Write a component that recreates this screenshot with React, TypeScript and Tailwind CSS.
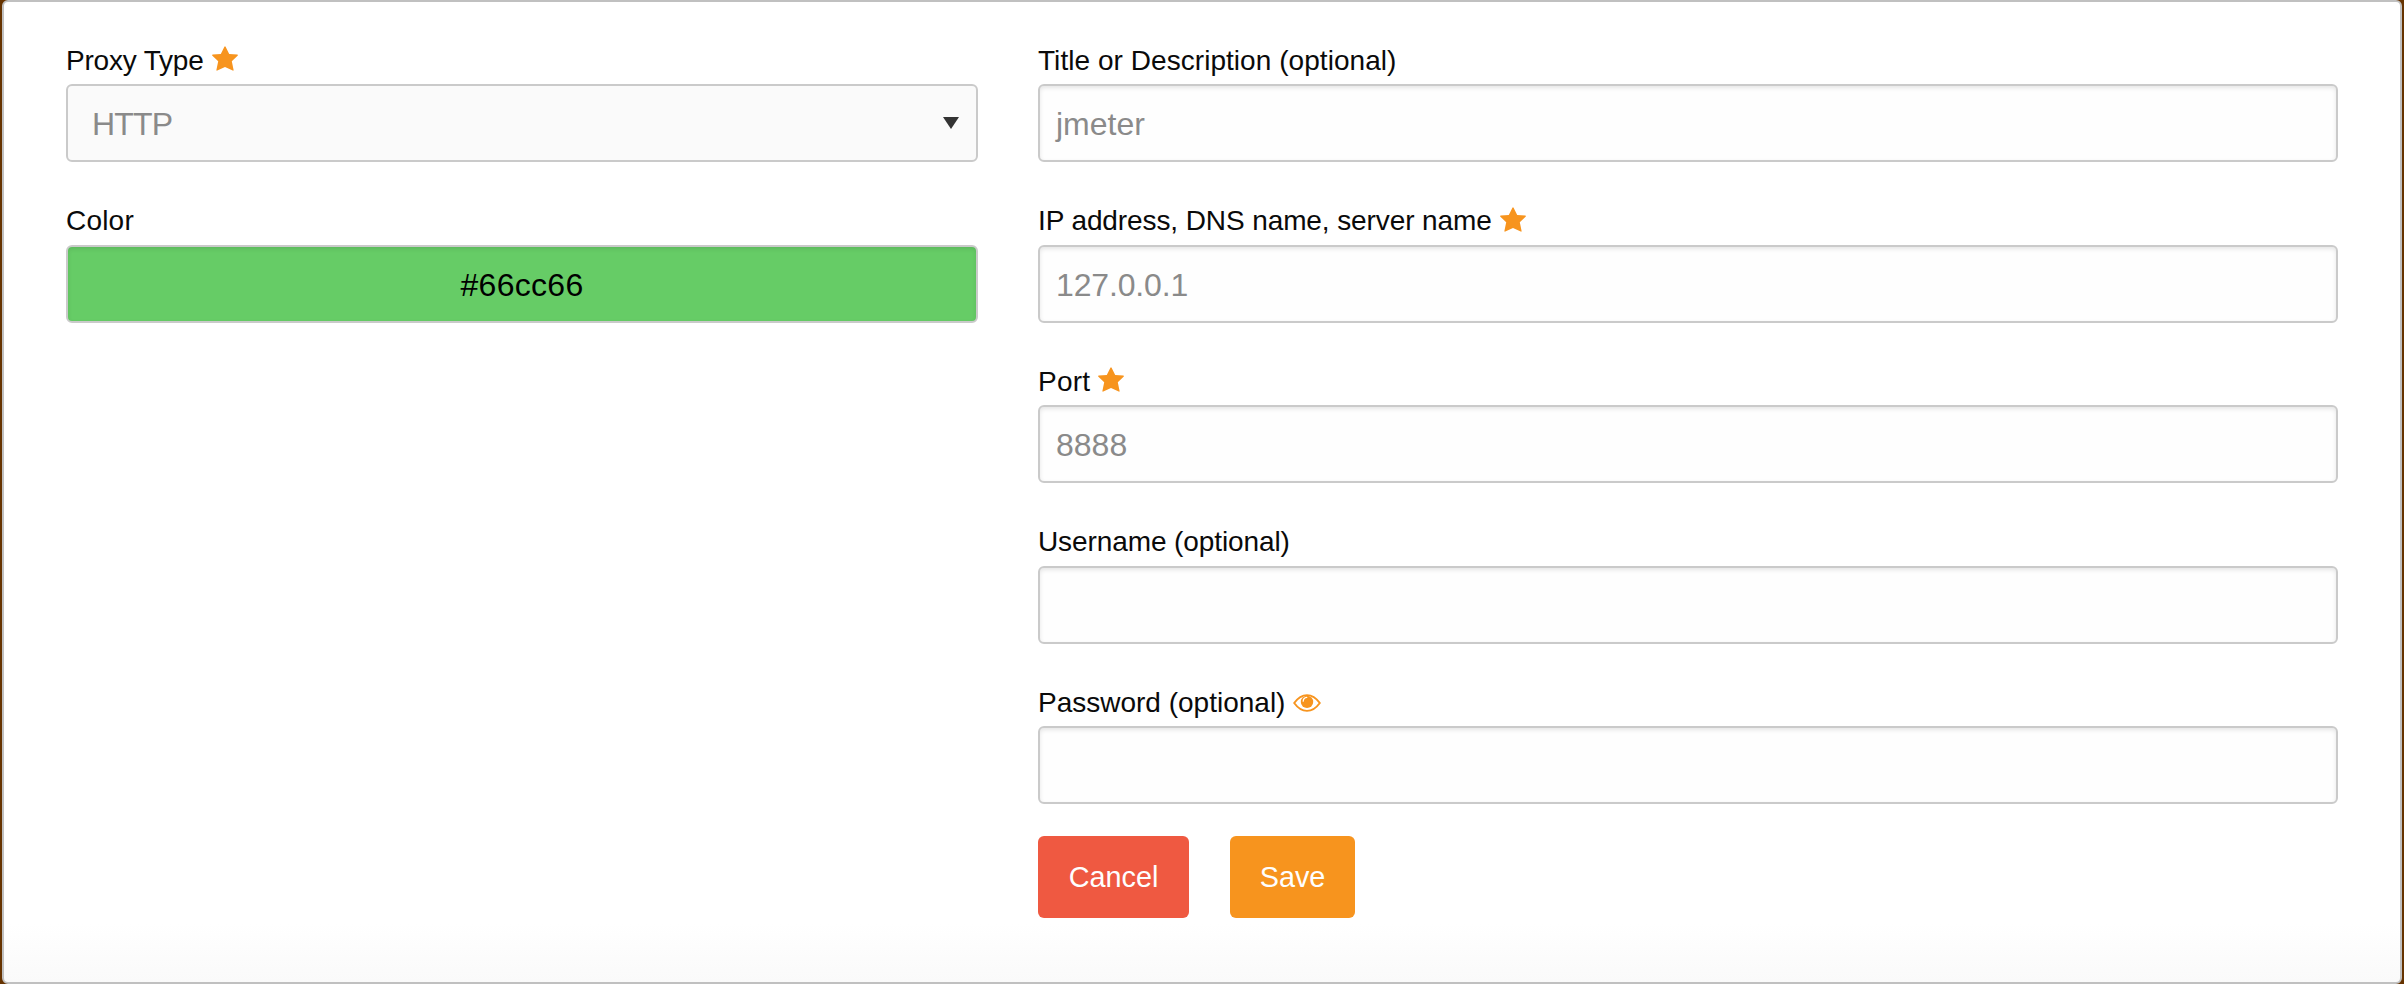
import type { ReactNode } from 'react';

function Star() {
  return (
    <svg viewBox="0 0 26 25" className="ml-[8px] mb-[4px] h-[25px] w-[26px] shrink-0" fill="#f7941e">
      <path d="M12.4.7Q13-.2 13.6.7L17.2 7.9 25.3 8.6Q26.3 8.9 25.6 9.7L19.8 15.3 21.6 24Q21.6 25 20.7 24.6L13 20.9 5.3 24.6Q4.4 25 4.4 24L6.2 15.3.4 9.7Q-.3 8.9.7 8.6L8.8 7.9Z" />
    </svg>
  );
}

function Eye() {
  return (
    <svg viewBox="0 0 28 18" className="ml-[7.5px] h-[18px] w-[28px] shrink-0">
      <path d="M1.2 9C4.8 4 9 1.1 14 1.1S23.2 4 26.8 9C23.2 14 19 16.9 14 16.9S4.8 14 1.2 9Z" fill="none" stroke="#f7941e" strokeWidth="1.9" />
      <circle cx="14" cy="7.9" r="6.2" fill="#f7941e" />
      <path d="M10.2 7.2A4 4 0 0 1 13.8 3.4" fill="none" stroke="#fff" strokeWidth="1.2" strokeLinecap="round" />
    </svg>
  );
}

function Field({ label, spacing, icon, children }: { label: string; spacing: string; icon?: ReactNode; children: ReactNode }) {
  return (
    <div className="mb-[32px]">
      <div className="flex h-[50.5px] items-center pt-[3.5px] text-[28px] leading-[46px] text-[#0a0a0a]">
        <span className={spacing}>{label}</span>
        {icon}
      </div>
      {children}
    </div>
  );
}

function Box({ value, spacing }: { value?: string; spacing?: string }) {
  return (
    <div className="flex h-[78px] items-center rounded-[6px] border-2 border-[#cacaca] bg-[#fefefe] px-[16px] pt-[2px] text-[32px] text-[#8a8a8a] shadow-[inset_0_2px_4px_rgba(10,10,10,0.1)]">
      <span className={spacing}>{value}</span>
    </div>
  );
}

export default function App() {
  return (
    <div className="h-[984px] w-[2404px] bg-[#663300] px-[2px] font-['Liberation_Sans',Arial,sans-serif]">
      <main className="flex h-full gap-[60px] rounded-[6px] border-2 border-[#c0c0c0] bg-[linear-gradient(to_bottom,#fff_94%,#fafafa)] pl-[62px] pt-[31.5px]">
        <section className="w-[912px]">
          <Field label="Proxy Type" spacing="tracking-[-0.2px]" icon={<Star />}>
            <div className="flex h-[78px] items-center justify-between rounded-[6px] border-2 border-[#cacaca] bg-[#fafafa] pl-[24px] pr-[17px] text-[32px] text-[#8a8a8a]">
              <span className="pt-[2px] tracking-[-0.8px]">HTTP</span>
              <svg viewBox="0 0 16 12" className="h-[12px] w-[16px]" fill="#333">
                <path d="M0 0H16L8 12Z" />
              </svg>
            </div>
          </Field>
          <Field label="Color" spacing="tracking-[0.2px]">
            <div className="flex h-[78px] items-center justify-center rounded-[6px] border-2 border-[#cacaca] bg-[#66cc66] pt-[2px] text-[32px] text-black shadow-[inset_0_2px_4px_rgba(10,10,10,0.1)]">
              <span className="tracking-[0.3px]">#66cc66</span>
            </div>
          </Field>
        </section>
        <section className="w-[1300px]">
          <Field label="Title or Description (optional)" spacing="tracking-[0.05px]">
            <Box value="jmeter" />
          </Field>
          <Field label="IP address, DNS name, server name" spacing="tracking-[-0.1px]" icon={<Star />}>
            <Box value="127.0.0.1" spacing="tracking-[-0.15px]" />
          </Field>
          <Field label="Port" spacing="tracking-[0.2px]" icon={<Star />}>
            <Box value="8888" />
          </Field>
          <Field label="Username (optional)" spacing="tracking-[-0.1px]">
            <Box />
          </Field>
          <Field label="Password (optional)" spacing="" icon={<Eye />}>
            <Box />
          </Field>
          <div className="flex gap-[41px] text-[28.8px] text-[#fefefe]">
            <button className="h-[82px] w-[151px] rounded-[6px] bg-[#ef5941] pt-[2px]">Cancel</button>
            <button className="h-[82px] w-[125px] rounded-[6px] bg-[#f7941e] pt-[2px]">Save</button>
          </div>
        </section>
      </main>
    </div>
  );
}
